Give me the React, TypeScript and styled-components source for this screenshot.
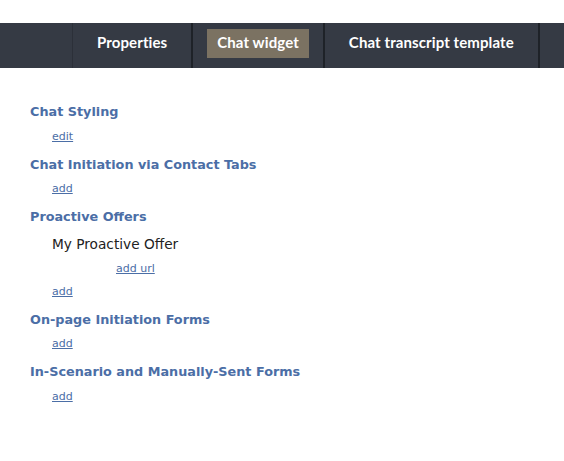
import React from "react";
import styled, { createGlobalStyle } from "styled-components";

const GlobalStyle = createGlobalStyle`
  html, body {
    margin: 0;
    padding: 0;
    background: #ffffff;
  }
  body {
    font-family: "DejaVu Sans", Verdana, sans-serif;
  }
`;

const Page = styled.div`
  width: 564px;
  min-height: 461px;
  padding-top: 23px;
  box-sizing: border-box;
`;

const NavBar = styled.nav`
  height: 45px;
  background: #353a44;
  display: flex;
  align-items: stretch;
  padding-left: 72px;
`;

const NavList = styled.ul`
  list-style: none;
  margin: 0;
  padding: 0;
  display: flex;
  align-items: stretch;
  border-left: 1px solid #2c3039;
`;

const NavItem = styled.li`
  display: flex;
  align-items: flex-start;
  padding: 6px 14px 0 14px;
  border-right: 2px solid #1e2228;
`;

const NavLink = styled.a<{ $active?: boolean }>`
  display: block;
  height: 29px;
  line-height: 27px;
  padding: 0 10px;
  font-family: Lato, "Open Sans", sans-serif;
  font-weight: 700;
  font-size: 15px;
  letter-spacing: 0.1px;
  color: #ffffff;
  text-decoration: none;
  background: ${(p) => (p.$active ? "#7b7262" : "transparent")};
  cursor: pointer;
`;

const Content = styled.main`
  padding: 34px 0 0 30px;
  display: flex;
  flex-direction: column;
  gap: 4.5px;
`;

const Section = styled.section`
  display: flex;
  flex-direction: column;
`;

const Heading = styled.h3`
  margin: 0;
  height: 20px;
  line-height: 20px;
  font-family: "DejaVu Sans", Verdana, sans-serif;
  font-weight: 700;
  font-size: 12.8px;
  color: #4b6ea6;
`;

const LinkRow = styled.div<{ $indent?: number; $h?: number }>`
  height: ${(p) => p.$h ?? 28}px;
  display: flex;
  align-items: center;
  padding-left: ${(p) => p.$indent ?? 22}px;
`;

const SmallLink = styled.a`
  font-family: "DejaVu Sans", Verdana, sans-serif;
  font-size: 11px;
  color: #4b6ea6;
  text-decoration: underline;
  cursor: pointer;
`;

const ItemName = styled.div`
  height: 33px;
  display: flex;
  align-items: center;
  padding-left: 22px;
  font-family: "DejaVu Sans", Verdana, sans-serif;
  font-size: 13.7px;
  color: #222222;
`;

export default function App() {
  return (
    <>
      <GlobalStyle />
      <Page>
        <NavBar>
          <NavList>
            <NavItem>
              <NavLink>Properties</NavLink>
            </NavItem>
            <NavItem>
              <NavLink $active>Chat widget</NavLink>
            </NavItem>
            <NavItem>
              <NavLink>Chat transcript template</NavLink>
            </NavItem>
          </NavList>
        </NavBar>
        <Content>
          <Section>
            <Heading>Chat Styling</Heading>
            <LinkRow>
              <SmallLink>edit</SmallLink>
            </LinkRow>
          </Section>
          <Section>
            <Heading>Chat Initiation via Contact Tabs</Heading>
            <LinkRow>
              <SmallLink>add</SmallLink>
            </LinkRow>
          </Section>
          <Section>
            <Heading>Proactive Offers</Heading>
            <ItemName>My Proactive Offer</ItemName>
            <LinkRow $indent={86} $h={17}>
              <SmallLink>add url</SmallLink>
            </LinkRow>
            <LinkRow>
              <SmallLink>add</SmallLink>
            </LinkRow>
          </Section>
          <Section>
            <Heading>On-page Initiation Forms</Heading>
            <LinkRow>
              <SmallLink>add</SmallLink>
            </LinkRow>
          </Section>
          <Section>
            <Heading>In-Scenario and Manually-Sent Forms</Heading>
            <LinkRow>
              <SmallLink>add</SmallLink>
            </LinkRow>
          </Section>
        </Content>
      </Page>
    </>
  );
}
